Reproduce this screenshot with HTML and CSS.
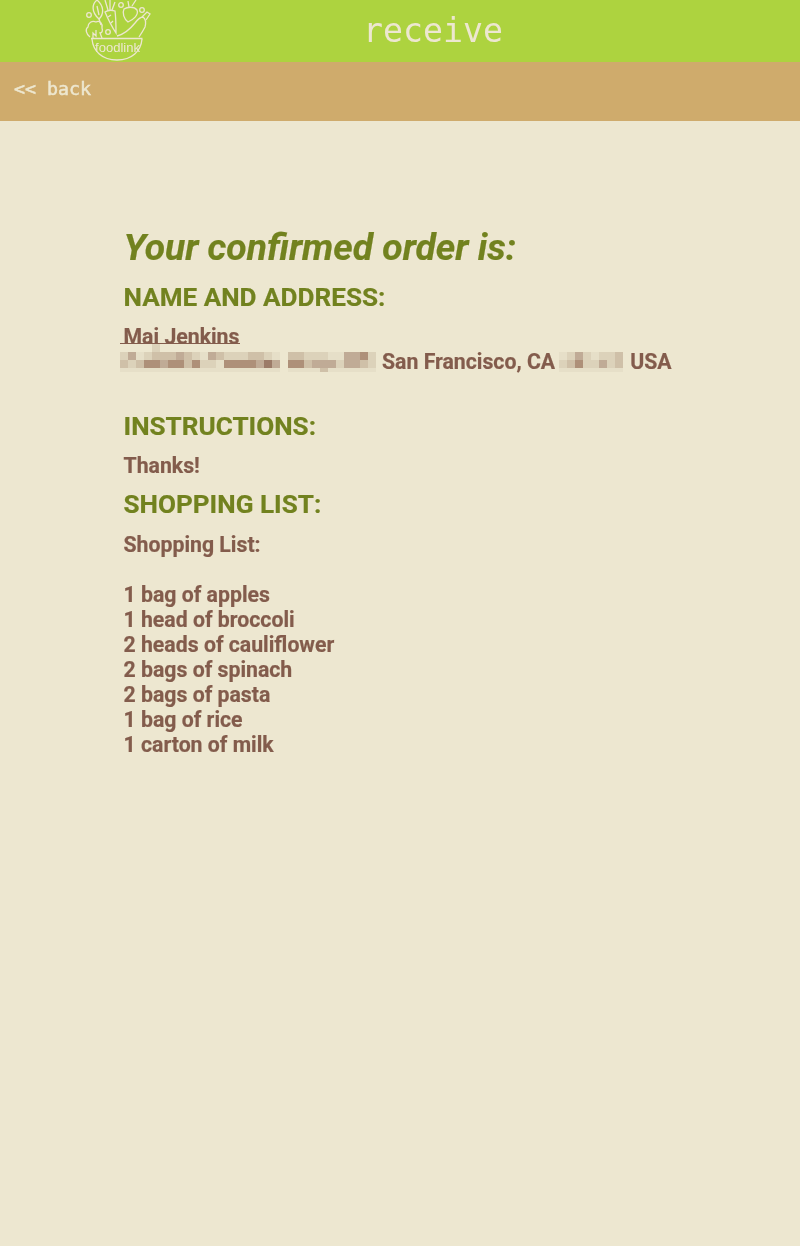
FILE: index.html
```html
<!DOCTYPE html>
<html lang="en">
<head>
<meta charset="utf-8">
<title>receive</title>
<link rel="stylesheet" href="styles.css">
</head>
<body>
<header class="topbar">
  <svg class="logo" viewBox="84 0 67 62" aria-label="foodlink logo">
    <g class="logo-lines">
      <path d="M91 38.500H142.500"/>
      <path d="M92 39C93 51 102 60 117 60C132 60 141 51 142 39"/>
      <path d="M97 0C92 4 91 12 99 19C105 13 103 5 97 0Z"/>
      <path d="M99 19L101 25M97 6L99 15"/>
      <path d="M90 37C86 34 85 29 88 27C88 23 92 20 96 22C100 20 103 24 102 28C103 31 102 33 100 33L102 38M93 38L93 33L96 36L96 30"/>
      <path d="M105 12C108 10 112 10 115 11C116 18 116 26 116 33C112 27 108 19 105 12Z"/>
      <path d="M108 10L105 0M110 10L110 0M112 10L115 2M108 17L111 15M111 23L113 21"/>
      <path d="M124 9C127 7 134 6 137 10C139 15 133 20 128 22C124 19 122 13 124 9Z"/>
      <path d="M129 7L128 1M132 6L136 0"/>
      <path d="M117 36C125 34 131 28 135 23C138 19 141 17 143 17C146 19 146 23 145 27C143 31 141 34 139 37"/>
      <path d="M142 17L147 12L150 14L146 20"/>
      <circle cx="89" cy="15" r="2.300"/>
      <circle cx="108" cy="32" r="2.300"/>
      <circle cx="121" cy="5" r="2.300"/>
      <circle cx="142" cy="10" r="2.300"/>
    </g>
    <text class="logo-text" x="95" y="52" textLength="45" lengthAdjust="spacingAndGlyphs">foodlink</text>
  </svg>
  <h1 class="page-name">receive</h1>
</header>
<nav class="backbar"><a class="back" href="#">&lt;&lt; back</a></nav>
<main class="content">
  <h2 class="order-title">Your confirmed order is:</h2>
  <h3 class="section-title name-title">NAME AND ADDRESS:</h3>
  <div class="address">
    <div class="name-line">Mai Jenkins</div>
    <div class="street-line">
      <svg class="blur blur-street" viewBox="0 0 256 32" aria-hidden="true">
        <g>
          <rect class="c1" x="32" y="0" width="8" height="8"/>
          <rect class="c1" x="0" y="8" width="8" height="8"/><rect class="c3" x="8" y="8" width="8" height="8"/><rect class="c0" x="16" y="8" width="8" height="8"/><rect class="c1" x="24" y="8" width="8" height="8"/><rect class="c2" x="32" y="8" width="24" height="8"/><rect class="c3" x="56" y="8" width="8" height="8"/><rect class="c2" x="64" y="8" width="8" height="8"/><rect class="c1" x="72" y="8" width="8" height="8"/><rect class="c0" x="80" y="8" width="8" height="8"/><rect class="c3" x="88" y="8" width="8" height="8"/><rect class="c2" x="96" y="8" width="8" height="8"/><rect class="c1" x="104" y="8" width="24" height="8"/><rect class="c2" x="128" y="8" width="16" height="8"/><rect class="c1" x="144" y="8" width="8" height="8"/><rect class="c0" x="152" y="8" width="8" height="8"/><rect class="c2" x="168" y="8" width="16" height="8"/><rect class="c1" x="184" y="8" width="24" height="8"/><rect class="c0" x="208" y="8" width="16" height="8"/><rect class="c3" x="224" y="8" width="16" height="8"/><rect class="c4" x="240" y="8" width="8" height="8"/><rect class="c1" x="248" y="8" width="8" height="8"/>
          <rect class="c2" x="0" y="16" width="8" height="8"/><rect class="c1" x="8" y="16" width="8" height="8"/><rect class="c2" x="16" y="16" width="8" height="8"/><rect class="c4" x="24" y="16" width="16" height="8"/><rect class="c3" x="40" y="16" width="8" height="8"/><rect class="c4" x="48" y="16" width="16" height="8"/><rect class="c2" x="64" y="16" width="8" height="8"/><rect class="c4" x="72" y="16" width="8" height="8"/><rect class="c1" x="80" y="16" width="16" height="8"/><rect class="c0" x="96" y="16" width="8" height="8"/><rect class="c4" x="104" y="16" width="32" height="8"/><rect class="c3" x="136" y="16" width="8" height="8"/><rect class="c5" x="144" y="16" width="8" height="8"/><rect class="c3" x="152" y="16" width="8" height="8"/><rect class="c4" x="168" y="16" width="16" height="8"/><rect class="c2" x="184" y="16" width="8" height="8"/><rect class="c3" x="192" y="16" width="24" height="8"/><rect class="c1" x="216" y="16" width="8" height="8"/><rect class="c3" x="224" y="16" width="16" height="8"/><rect class="c2" x="240" y="16" width="8" height="8"/><rect class="c1" x="248" y="16" width="8" height="8"/>
          <rect class="c0" x="0" y="24" width="160" height="4"/><rect class="c0" x="168" y="24" width="88" height="4"/><rect class="c2" x="200" y="24" width="8" height="4"/>
        </g>
      </svg><span class="after-blur">San Francisco, CA</span><svg class="blur blur-zip" viewBox="0 0 68 32" aria-hidden="true">
        <g>
          <rect class="c0" x="4" y="8" width="8" height="8"/><rect class="c1" x="12" y="8" width="8" height="8"/><rect class="c3" x="20" y="8" width="8" height="8"/><rect class="c1" x="28" y="8" width="8" height="8"/><rect class="c0" x="36" y="8" width="8" height="8"/><rect class="c1" x="44" y="8" width="16" height="8"/><rect class="c2" x="60" y="8" width="8" height="8"/>
          <rect class="c1" x="4" y="16" width="8" height="8"/><rect class="c2" x="12" y="16" width="8" height="8"/><rect class="c4" x="20" y="16" width="8" height="8"/><rect class="c1" x="28" y="16" width="16" height="8"/><rect class="c3" x="44" y="16" width="8" height="8"/><rect class="c1" x="52" y="16" width="8" height="8"/><rect class="c2" x="60" y="16" width="8" height="8"/>
          <rect class="c0" x="4" y="24" width="64" height="4"/>
        </g>
      </svg><span class="after-zip">USA</span>
    </div>
  </div>
  <h3 class="section-title instructions">INSTRUCTIONS:</h3>
  <p class="para">Thanks!</p>
  <h3 class="section-title list-title">SHOPPING LIST:</h3>
  <p class="para">Shopping List:</p>
  <ul class="items">
    <li>1 bag of apples</li>
    <li>1 head of broccoli</li>
    <li>2 heads of cauliflower</li>
    <li>2 bags of spinach</li>
    <li>2 bags of pasta</li>
    <li>1 bag of rice</li>
    <li>1 carton of milk</li>
  </ul>
</main>
</body>
</html>
```
FILE: styles.css
```css
* { box-sizing: border-box; }
html, body { margin: 0; padding: 0; }
body {
  min-height: 1246px;
  background: #ede7d0;
  color: #835c4c;
  font-family: Roboto, "Liberation Sans", sans-serif;
  font-weight: 700;
  overflow: hidden;
}
.topbar {
  height: 62px;
  background: #add33f;
  display: flex;
  padding-left: 84px;
  overflow: hidden;
}
.logo { width: 67px; height: 62px; flex: none; filter: blur(0.3px); }
.logo-lines { fill: none; stroke: #ede7d0; stroke-width: 1.3; }
.logo-text { fill: #ede7d0; font-family: "Liberation Sans", sans-serif; font-size: 13px; font-weight: 400; }
.page-name {
  margin: 0 0 0 212px;
  font-family: "DejaVu Sans Mono", monospace;
  font-weight: 400;
  font-size: 33.200px;
  line-height: 62px;
  color: #ede7d0;
  filter: blur(0.3px);
}
.backbar {
  height: 59px;
  background: #cfab6c;
  display: flex;
  align-items: center;
  padding-left: 14px;
}
.back {
  font-family: "DejaVu Sans Mono", monospace;
  font-weight: 400;
  font-size: 18.300px;
  color: #ede7d0;
  text-decoration: none;
  -webkit-text-stroke: 0.5px #ede7d0;
  filter: blur(0.3px);
  position: relative;
  top: -3px;
}
.content { padding: 105px 0 0 123.500px; filter: blur(0.3px); -webkit-text-stroke: 0.2px; }
.order-title {
  margin: 0;
  font-size: 37.200px;
  line-height: 43px;
  font-style: italic;
  font-weight: 700;
  color: #72821f;
}
.section-title {
  margin: 0;
  font-size: 26.100px;
  line-height: 30px;
  font-weight: 700;
  color: #72821f;
}
.name-title { margin-top: 13px; }
.address { margin-top: 12px; font-size: 21.250px; line-height: 25px; }
.name-line { position: relative; }
.name-line::after {
  content: "";
  position: absolute;
  left: -3.500px;
  top: 19px;
  width: 120px;
  height: 1px;
  background: #835c4c;
}
.street-line { display: flex; margin-left: -3.500px; height: 25px; white-space: nowrap; }
.blur { display: block; flex: none; height: 32px; margin-top: -5px; }
.blur-street { width: 256px; }
.blur-zip { width: 68px; }
.after-blur { margin-left: 6px; }
.after-zip { margin-left: 7px; }
.c0 { fill: #e6dfc8; }
.c1 { fill: #dcd2ba; }
.c2 { fill: #cfc0a8; }
.c3 { fill: #c0ab96; }
.c4 { fill: #ae9079; }
.c5 { fill: #9c7b68; }
.instructions { margin-top: 37px; }
.para { margin: 12px 0 0; font-size: 21.250px; line-height: 25px; }
.list-title { margin-top: 11px; }
.list-title + .para { margin-top: 13px; }
.items { list-style: none; margin: 25px 0 0; padding: 0; font-size: 21.250px; line-height: 25px; }
```
